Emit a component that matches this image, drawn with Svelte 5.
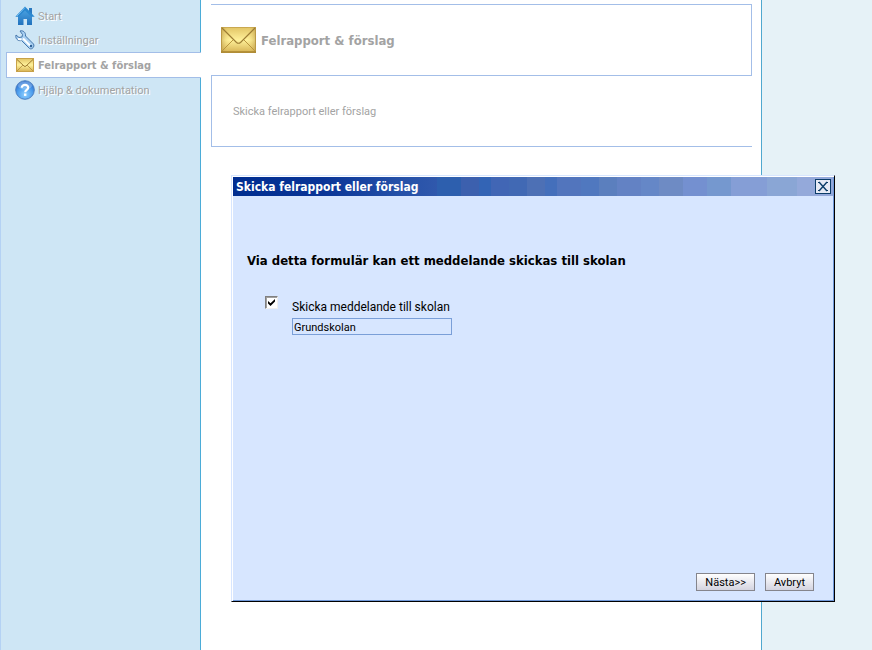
<script>
  let sendToSchool = true;
  let school = "Grundskolan";
  let open = true;

  const menu = [
    { icon: "home", label: "Start" },
    { icon: "wrench", label: "Inställningar" },
    { icon: "mail", label: "Felrapport & förslag", active: true },
    { icon: "help", label: "Hjälp & dokumentation" },
  ];

  function close() {
    open = false;
  }
</script>

<svg class="defs" aria-hidden="true">
  <defs>
    <linearGradient id="gold" x1="0" y1="0" x2="0" y2="1">
      <stop offset="0" stop-color="#e2c566" />
      <stop offset="0.5" stop-color="#fff19a" />
      <stop offset="1" stop-color="#d6b253" />
    </linearGradient>
    <linearGradient id="goldEdge" x1="0" y1="0" x2="1" y2="0">
      <stop offset="0" stop-color="#a98535" stop-opacity="0.5" />
      <stop offset="0.25" stop-color="#f6dc7c" stop-opacity="0" />
      <stop offset="0.75" stop-color="#f6dc7c" stop-opacity="0" />
      <stop offset="1" stop-color="#a98535" stop-opacity="0.5" />
    </linearGradient>
    <linearGradient id="blue" x1="0" y1="0" x2="0" y2="1">
      <stop offset="0" stop-color="#4ba3e2" />
      <stop offset="1" stop-color="#2272bd" />
    </linearGradient>
    <radialGradient id="ball" cx="0.5" cy="0.75" r="0.7">
      <stop offset="0" stop-color="#8fd0ff" />
      <stop offset="0.6" stop-color="#4b9cec" />
      <stop offset="1" stop-color="#2b6fd0" />
    </radialGradient>
  </defs>
</svg>

<div class="page">
  <nav class="sidebar">
    {#each menu as item}
      <a href="#{item.icon}" class="item" class:active={item.active}>
        <span class="icon">
          {#if item.icon === "home"}
            <svg width="20" height="20" viewBox="0 0 20 20">
              <path d="M14 2H17v7h-3z" fill="#2a79c0" />
              <path d="M3 9.500L10 3l7 6.500V19h-5v-6H8.500v6H3z" fill="url(#blue)" />
              <path d="M10 0.500L0.300 10.800H3.500L10 4.500l6.500 6.300h3.200z" fill="#2b88d0" />
              <path d="M10 1.500L2 10" stroke="#74bdf0" stroke-width="1" />
            </svg>
          {:else if item.icon === "wrench"}
            <svg width="20" height="20" viewBox="0 0 20 20">
              <path
                d="M5 1C8 0 11 2.500 10.500 6L18.500 14C20 16.500 17 20 14.500 18.500L6.500 10.500C3 11.500 0 8.500 1 5L4 7.500L7 7L7.500 4.500z"
                fill="#a9d0f2"
                stroke="#4677ab"
                stroke-width="1"
                stroke-linejoin="round"
              />
              <path d="M3 9l3.500 0.500M8 8.500L15 15.500" stroke="#fff" stroke-width="2" />
              <circle cx="16" cy="16" r="1.200" fill="#2f6195" />
            </svg>
          {:else if item.icon === "mail"}
            <svg width="18" height="14" viewBox="0 0 18 14">
              <rect x="0.500" y="0.500" width="17" height="13" fill="url(#gold)" stroke="#c8a248" />
              <path d="M1 13l6-6M17 13l-6-6" stroke="#b38d3c" stroke-width="0.800" />
              <path d="M1 1.500L8 8q1 1 2 0l7-6.500" fill="none" stroke="#9c7a30" stroke-width="1" />
            </svg>
          {:else}
            <svg width="20" height="20" viewBox="0 0 20 20">
              <circle cx="10" cy="10" r="9.300" fill="url(#ball)" stroke="#4d80c0" stroke-width="1" />
              <ellipse cx="10" cy="5.500" rx="7" ry="4" fill="#fff" opacity="0.25" />
              <path d="M6.800 7.800C6.800 3.800 13.300 4 13.200 7.800C13.200 10 10.200 10 10.200 12.300" fill="none" stroke="#fff" stroke-width="2.200" />
              <rect x="9" y="13.500" width="2.400" height="2.400" fill="#fff" />
            </svg>
          {/if}
        </span>
        <span>{item.label}</span>
      </a>
    {/each}
  </nav>

  <main class="content">
    <header class="head">
      <svg width="35" height="26" viewBox="0 0 35 26">
        <rect x="0.500" y="0.500" width="34" height="25" fill="url(#gold)" stroke="#c9a850" />
        <rect x="0" y="0" width="35" height="26" fill="url(#goldEdge)" />
        <path d="M1 24L13 12M34 24L22 12" stroke="#b9963f" stroke-width="1" />
        <path d="M1 1l14.500 14.500q2 1.500 4 0L34 1" fill="none" stroke="#9c7d34" stroke-width="1.200" />
        <path d="M0 25h35" stroke="#a8842f" stroke-width="1.500" />
      </svg>
      <h1>Felrapport &amp; förslag</h1>
    </header>
    <section class="intro">Skicka felrapport eller förslag</section>
  </main>
</div>

{#if open}
  <div class="dialog" role="dialog" aria-labelledby="dialog-title">
    <div class="title-bar">
      <span id="dialog-title">Skicka felrapport eller förslag</span>
      <button class="close" aria-label="Stäng" on:click={close}>
        <svg width="12" height="11" viewBox="0 0 12 11">
          <path d="M2 1l8 9M10 1l-8 9" stroke="#0b3c69" stroke-width="1.400" />
          <path d="M1 1.500h2M9 1.500h2M1 9.500h2M9 9.500h2" stroke="#0b3c69" />
        </svg>
      </button>
    </div>

    <form class="body" on:submit|preventDefault={close}>
      <h2>Via detta formulär kan ett meddelande skickas till skolan</h2>
      <div class="choice">
        <input id="send" type="checkbox" bind:checked={sendToSchool} />
        <div class="field">
          <label for="send">Skicka meddelande till skolan</label>
          <input class="school" type="text" aria-label="Skola" bind:value={school} />
        </div>
      </div>
      <div class="buttons">
        <button type="submit">Nästa&gt;&gt;</button>
        <button type="button" on:click={close}>Avbryt</button>
      </div>
    </form>
  </div>
{/if}

<style>
  :global(body) {
    margin: 0;
    background: #e6f2f7;
    font-family: Tahoma, Roboto, sans-serif;
    font-size: 11px;
  }

  .defs {
    position: absolute;
    width: 0;
    height: 0;
  }

  .page {
    display: grid;
    grid-template-columns: 201px 1fr;
    min-height: 100vh;
    margin-right: 110px;
    background: #fff;
    border-right: 1px solid #4fa8cf;
    box-sizing: border-box;
  }

  .sidebar {
    display: flex;
    flex-direction: column;
    padding: 4px 0 0 5px;
    background: #cee6f5;
    border-left: 1px solid #b4d2f4;
    border-right: 1px solid #4bacd8;
  }

  .item {
    display: flex;
    align-items: center;
    gap: 3px;
    height: 24px;
    padding-left: 9px;
    color: #a3a3a3;
    text-decoration: none;
    text-shadow: 1px 1px 0 #fff;
  }

  .item.active {
    margin-right: -1px;
    padding-left: 8px;
    background: #fff;
    border: 1px solid #a3bee8;
    border-right: 0;
    text-shadow: none;
  }

  .icon {
    display: flex;
    justify-content: center;
    width: 20px;
  }

  .content {
    padding: 4px 9px 0 10px;
  }

  .head {
    display: flex;
    align-items: center;
    gap: 5px;
    height: 70px;
    padding-left: 10px;
    border: 1px solid #a3bee8;
    border-left: 0;
  }

  h1,
  h2,
  .title-bar,
  .item.active {
    font-family: Tahoma, "DejaVu Sans Condensed", "DejaVu Sans", sans-serif;
    font-weight: bold;
  }

  h1 {
    margin: 0;
    color: #a3a3a3;
    font-size: 13px;
  }

  .intro {
    display: flex;
    align-items: center;
    height: 70px;
    padding-left: 21px;
    border-left: 1px solid #a3bee8;
    border-bottom: 1px solid #a3bee8;
    color: #a3a3a3;
  }

  /* floating window over the page */
  .dialog {
    position: absolute;
    top: 175px;
    left: 231px;
    display: flex;
    flex-direction: column;
    box-sizing: border-box;
    width: 604px;
    height: 427px;
    background: #d7e6ff;
    border: 1px solid #d7e6ff;
    border-right-color: #000;
    border-bottom-color: #000;
    box-shadow: inset 1px 1px #fff, inset -1px -1px #6f98d8;
  }

  .title-bar {
    display: flex;
    align-items: center;
    justify-content: space-between;
    height: 19px;
    margin: 1px 1px 0;
    padding: 0 2px 0 3px;
    background: linear-gradient(
      90deg,
      #002d90 0%,
      #0a3597 15%,
      #2551a8 28%,
      #3058ac 34%,
      #2d5fae 34% 38%,
      #3c60ae 38% 41%,
      #3364b5 41% 43%,
      #4166b5 43% 46%,
      #4169b4 46% 49%,
      #4d70b5 49% 52%,
      #446fbb 52% 54%,
      #5275bd 54% 58%,
      #5078bf 58% 61%,
      #5b7fbe 61% 64%,
      #6382c4 64% 68%,
      #6587c7 68% 71%,
      #6e8bc4 71% 75%,
      #7490d0 75% 79%,
      #7598cf 79% 83%,
      #859ed6 83% 89%,
      #8aa6d5 89% 94%,
      #94a9da 94% 100%
    );
    color: #fff;
    font-size: 12px;
  }

  button {
    font-family: inherit;
    font-size: 11px;
    color: #000;
  }

  .close {
    display: flex;
    align-items: center;
    justify-content: center;
    width: 16px;
    height: 15px;
    padding: 0;
    background: #e6eaf5;
    border: 1px solid #0b3c69;
  }

  .body {
    display: flex;
    flex: 1;
    flex-direction: column;
    padding: 56px 20px 10px 15px;
  }

  h2 {
    margin: 0;
    font-size: 13px;
    line-height: 18px;
  }

  .choice {
    display: flex;
    gap: 14px;
    margin: 26px 0 0 18px;
  }

  input[type="checkbox"] {
    appearance: none;
    width: 13px;
    height: 13px;
    margin: 0;
    background: #fff;
    border: 1px solid #f0f0f0;
    border-top-color: #808080;
    border-left-color: #808080;
    box-shadow: inset 1px 1px #a0a0a0;
  }

  input[type="checkbox"]:checked::before {
    content: "";
    display: block;
    width: 7px;
    height: 7px;
    margin: 2px 0 0 2px;
    background: #000;
    clip-path: polygon(0 30%, 36% 62%, 100% 0, 100% 36%, 36% 100%, 0 66%);
  }

  .field {
    display: flex;
    flex-direction: column;
    gap: 2px;
  }

  label {
    padding-top: 3px;
    font-size: 12px;
    line-height: 17px;
  }

  .school {
    box-sizing: border-box;
    width: 160px;
    height: 17px;
    padding: 1px 1px 0;
    background: transparent;
    border: 1px solid #7a9fd8;
    border-radius: 0;
    font-family: inherit;
    font-size: 11px;
    color: #000;
  }

  .buttons {
    display: flex;
    justify-content: flex-end;
    gap: 10px;
    margin-top: auto;
  }

  .buttons button {
    height: 18px;
    padding: 0 8px;
    background: linear-gradient(#fff, #d4d4e0);
    border: 1px solid #85858c;
    border-radius: 0;
  }
</style>
